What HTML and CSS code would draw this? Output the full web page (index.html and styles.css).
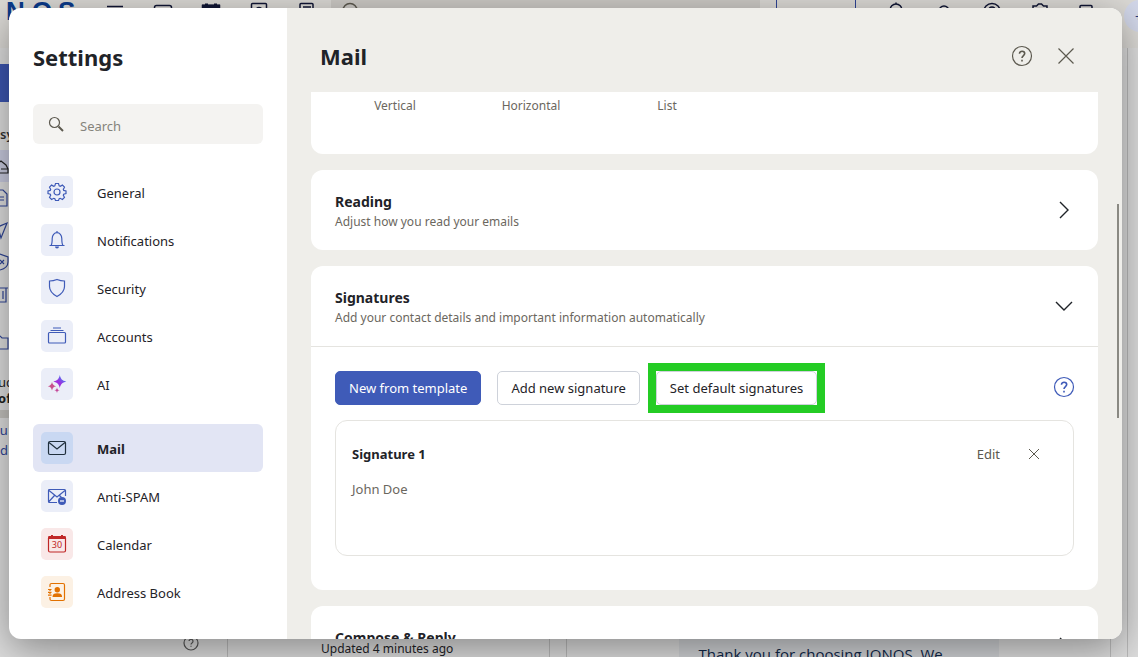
FILE: index.html
```html
<!DOCTYPE html>
<html lang="en">

<head>
    <meta charset="UTF-8">
    <title>Settings - Mail</title>
    <link rel="stylesheet" href="styles.css">
</head>

<body>

    <!-- Mail app behind the dialog -->
    <div class="app" aria-hidden="true">
        <div class="topbar">
            <svg class="logo" width="105" height="48" viewBox="0 0 105 48">
                <text x="6" y="32">N</text>
                <text x="32" y="32">O</text>
                <text x="58" y="32">S</text>
            </svg>
            <div class="topbar-apps">
                <svg class="icon" viewBox="0 0 20 20"><path d="M2 4.500h16M2 10h16M2 16h16"/></svg>
                <svg class="icon" viewBox="0 0 20 20"><rect x="1.500" y="3.500" width="17" height="13" rx="2"/></svg>
                <svg class="icon" viewBox="0 0 20 20"><path d="M1.500 3.500h17v14h-17z"/><path class="solid" d="M1 2.500h18v5.500H1zM4 1.500h3v2H4zM13 1.500h3v2h-3z"/></svg>
                <svg class="icon" viewBox="0 0 20 20"><rect x="2.500" y="1.500" width="15" height="17" rx="1"/><circle cx="10" cy="8" r="2.500"/></svg>
                <svg class="icon" viewBox="0 0 20 20"><rect x="3" y="1.500" width="13" height="17" rx="1"/><path d="M6 5h8M6 9h8"/></svg>
            </div>
            <div class="topbar-search">
                <svg class="icon" viewBox="0 0 20 20"><circle cx="9" cy="8.500" r="7"/></svg>
            </div>
            <div class="topbar-promo"></div>
            <div class="topbar-tools">
                <svg class="icon" viewBox="0 0 20 20"><path d="M4 15V8a6 6 0 0 1 12 0v7zM10 0.500v2"/></svg>
                <svg class="icon" viewBox="0 0 20 20"><circle cx="10" cy="9" r="5"/></svg>
                <svg class="icon" viewBox="0 0 20 20"><circle cx="10" cy="10" r="8.500"/><circle cx="10" cy="8" r="3"/></svg>
                <svg class="icon" viewBox="0 0 20 20"><path d="M3 8V4h3.500L8.500 2h3l2 2H17v4"/></svg>
                <svg class="icon" viewBox="0 0 20 20"><rect x="2" y="3.500" width="12" height="13" rx="1"/></svg>
            </div>
            <span class="avatar">+</span>
        </div>
        <div class="panes">
            <div class="folders">
                <div class="folders-compose"></div>
                <p class="folders-account">sy</p>
                <div class="folders-row current"><svg class="icon" viewBox="0 0 20 20"><path d="M7 9l5-4 5 4 2 4v4H5M12 13h7"/></svg></div>
                <div class="folders-row"><svg class="icon" viewBox="0 0 20 20"><path d="M5 2h9l4 4v12H5M10 9h5M10 12h5"/></svg></div>
                <div class="folders-row"><svg class="icon" viewBox="0 0 20 20"><path d="M4 9L18 3l-6 15-2-7z"/></svg></div>
                <div class="folders-row"><svg class="icon" viewBox="0 0 20 20"><path d="M11 2l8 3v5c0 5-4 7-8 8M11 8l4 4M15 8l-4 4"/></svg></div>
                <div class="folders-row"><svg class="icon" viewBox="0 0 20 20"><path d="M4 4h15M5 4v14h12V4M10 7v8M14 7v8"/></svg></div>
                <div class="folders-row spaced"><svg class="icon" viewBox="0 0 20 20"><path d="M4 4h7l2 2h6v11H4"/></svg></div>
                <p class="folders-quota">uc<br><b>of</b></p>
                <div class="folders-promo">ou<br>nd</div>
                <svg class="icon folders-help" viewBox="0 0 20 20"><circle cx="10" cy="10" r="7"/><path d="M8 8a2 2 0 1 1 3 2c-.7.400-1 .8-1 1.500M10 12.700v1"/></svg>
            </div>
            <div class="messages">
                <p>Updated 4 minutes ago</p>
            </div>
            <div class="reader">
                <div class="reader-mail">Thank you for choosing IONOS. We</div>
            </div>
            <div class="rail"></div>
        </div>
    </div>

    <!-- Settings dialog -->
    <div class="dialog" role="dialog" aria-labelledby="dialog-title">
        <aside class="sidebar">
            <h2 id="dialog-title">Settings</h2>
            <label class="search">
                <svg class="icon" viewBox="0 0 20 20"><circle cx="8.500" cy="8.500" r="5"/><path d="M12.500 12.500l4.500 4.500" stroke-width="1.900"/></svg>
                <input type="text" placeholder="Search" aria-label="Search">
            </label>
            <nav class="menu">
                <a href="#general">
                    <span class="tile"><svg class="icon" viewBox="0 0 20 20"><circle cx="10" cy="10" r="3"/><path d="M8.500 1.500h3l.7 2.400 1 .4 2.200-1.200 2.100 2.100-1.200 2.200.4 1 2.300.6v2.500l-2.300.7-.4 1 1.200 2.200-2.100 2.100-2.200-1.200-1 .4-.7 1.800h-3l-.7-1.800-1-.4-2.200 1.200-2.100-2.100 1.200-2.200-.4-1-2.300-.7V9l2.300-.6.4-1-1.200-2.200 2.100-2.100 2.200 1.200 1-.4z"/></svg></span>
                    <span>General</span>
                </a>
                <a href="#notifications">
                    <span class="tile"><svg class="icon" viewBox="0 0 20 20"><path d="M2.500 15.500h15M4 15.500c1.200-1.500 1.200-3 1.200-7a4.800 5.800 0 0 1 9.600 0c0 4 0 5.500 1.200 7M10 1v2"/><path class="solid" d="M8 16.500h4a2 2 0 0 1-4 0z"/></svg></span>
                    <span>Notifications</span>
                </a>
                <a href="#security">
                    <span class="tile"><svg class="icon" viewBox="0 0 20 20"><path d="M10 1.500c2.500 1 5 1.500 7.500 1.500v5.500c0 4.500-3 7.500-7.500 10-4.500-2.500-7.500-5.500-7.500-10V3C5 3 7.500 2.500 10 1.500z"/></svg></span>
                    <span>Security</span>
                </a>
                <a href="#accounts">
                    <span class="tile"><svg class="icon" viewBox="0 0 20 20"><rect x="1.500" y="6.500" width="17" height="10.500" rx="1"/><path d="M3.500 4.500h13M6 2h8"/></svg></span>
                    <span>Accounts</span>
                </a>
                <a href="#ai">
                    <span class="tile"><svg class="icon" viewBox="0 0 20 20">
                        <defs>
                            <linearGradient id="spark" x1="1" y1="0" x2="0" y2="1">
                                <stop offset="0.200" stop-color="#4b7bf0"/>
                                <stop offset="0.550" stop-color="#9b30e0"/>
                                <stop offset="1" stop-color="#b832c8"/>
                            </linearGradient>
                        </defs>
                        <path class="spark" fill="url(#spark)" d="M12.800 1c1 4 2.200 5.500 6.500 6.500-4.300 1-5.500 2.500-6.500 6.500-1-4-2.200-5.500-6.500-6.500 4.300-1 5.500-2.500 6.500-6.500z"/>
                        <path class="spark" fill="#c8508c" d="M5 8c.7 2.700 1.500 3.500 4.200 4.200C6.500 12.900 5.700 13.700 5 16.400c-.7-2.700-1.500-3.500-4.200-4.200C3.500 11.500 4.300 10.700 5 8z"/>
                        <path class="spark" fill="#c4499a" d="M10 13.500c.4 1.900.9 2.400 2.800 2.800-1.900.4-2.400.9-2.800 2.800-.4-1.900-.9-2.400-2.800-2.800 1.900-.4 2.400-.9 2.800-2.800z"/>
                    </svg></span>
                    <span>AI</span>
                </a>
                <a href="#mail" class="active" aria-current="page">
                    <span class="tile"><svg class="icon" viewBox="0 0 20 20"><rect x="1.500" y="3.500" width="17" height="13" rx="1.500"/><path d="M2 4.500l8 6.500 8-6.500"/></svg></span>
                    <span>Mail</span>
                </a>
                <a href="#spam">
                    <span class="tile"><svg class="icon" viewBox="0 0 20 20"><path d="M10 16.500H2.500a1 1 0 0 1-1-1v-11a1 1 0 0 1 1-1h15a1 1 0 0 1 1 1V10M2 4.500l8 6.500 8-6.500M2 15.500l5.500-6M12.500 9.500l2 2"/><circle class="solid" cx="15" cy="15" r="4"/><path d="M13 15h4" stroke="#fff"/></svg></span>
                    <span>Anti-SPAM</span>
                </a>
                <a href="#calendar">
                    <span class="tile tile-red"><svg class="icon" viewBox="0 0 20 20"><rect x="1.500" y="2.500" width="17" height="15.500" rx="1.500"/><path class="solid" d="M1.500 2h17v3h-17zM4 1h2v1.500H4zM14 1h2v1.500h-2z"/><text x="10" y="14" text-anchor="middle">30</text></svg></span>
                    <span>Calendar</span>
                </a>
                <a href="#contacts">
                    <span class="tile tile-orange"><svg class="icon" viewBox="0 0 20 20"><path d="M3 5V3a1.500 1.500 0 0 1 1.500-1.500h11.500A1.500 1.500 0 0 1 17.500 3v14a1.500 1.500 0 0 1-1.500 1.500H4.500A1.500 1.500 0 0 1 3 17v-2M1 7.500h3.500M1 10.300h3.500M1 13.200h3.500M3 9v-1M3 12v-1"/><circle class="solid" cx="10.300" cy="7.700" r="2.700"/><path class="solid" d="M5.500 15c0-2.800 1.500-3.800 4.800-3.800s4.800 1 4.800 3.800z"/></svg></span>
                    <span>Address Book</span>
                </a>
            </nav>
        </aside>

        <main class="content">
            <header class="content-header">
                <h1>Mail</h1>
                <button type="button" class="icon-button" aria-label="Help"><svg class="icon" viewBox="0 0 24 24"><circle cx="12" cy="12" r="9.500"/><path stroke-width="1.600" d="M9.500 9.800c0-3.500 5.200-3.200 5.200-.2 0 1.900-2.700 2-2.700 4.400M12 15.800v1.700"/></svg></button>
                <button type="button" class="icon-button" aria-label="Close"><svg class="icon" viewBox="0 0 24 24"><path d="M4.500 4.500l15 15M19.500 4.500l-15 15"/></svg></button>
            </header>

            <div class="cards">
                <section class="card layouts">
                    <span>Vertical</span>
                    <span>Horizontal</span>
                    <span>List</span>
                </section>

                <section class="card">
                    <div class="card-header">
                        <div>
                            <h3>Reading</h3>
                            <p>Adjust how you read your emails</p>
                        </div>
                        <button type="button" class="toggle" aria-label="Expand Reading"><svg class="icon" viewBox="0 0 20 20"><path d="M6 2l8 8-8 8"/></svg></button>
                    </div>
                </section>

                <section class="card">
                    <div class="card-header">
                        <div>
                            <h3>Signatures</h3>
                            <p>Add your contact details and important information automatically</p>
                        </div>
                        <button type="button" class="toggle" aria-label="Collapse Signatures"><svg class="icon" viewBox="0 0 20 20"><path d="M2 6l8 8 8-8"/></svg></button>
                    </div>
                    <div class="card-body">
                        <div class="actions">
                            <button type="button" class="btn btn-primary">New from template</button>
                            <button type="button" class="btn">Add new signature</button>
                            <span class="highlight"><button type="button" class="btn">Set default signatures</button></span>
                            <button type="button" class="icon-button help" aria-label="Help"><svg class="icon" viewBox="0 0 24 24"><circle cx="12" cy="12" r="9.500"/><path stroke-width="1.600" d="M9.500 9.800c0-3.500 5.200-3.200 5.200-.2 0 1.900-2.700 2-2.700 4.400M12 15.800v1.700"/></svg></button>
                        </div>
                        <div class="signature">
                            <div class="signature-header">
                                <h4>Signature 1</h4>
                                <button type="button" class="link-button">Edit</button>
                                <button type="button" class="link-button" aria-label="Delete Signature 1"><svg class="icon icon-thin" viewBox="0 0 20 20"><path d="M5 5l10 10M15 5L5 15"/></svg></button>
                            </div>
                            <p>John Doe</p>
                        </div>
                    </div>
                </section>

                <section class="card">
                    <div class="card-header">
                        <div>
                            <h3>Compose &amp; Reply</h3>
                        </div>
                        <button type="button" class="toggle" aria-label="Expand Compose"><svg class="icon" viewBox="0 0 20 20"><path d="M6 2l8 8-8 8"/></svg></button>
                    </div>
                </section>
            </div>
            <div class="scroll-thumb"></div>
        </main>
    </div>

</body>

</html>
```
FILE: styles.css
```css
/* styles.css */

* {
    box-sizing: border-box;
}

body {
    margin: 0;
    height: 100vh;
    overflow: hidden;
    position: relative;
    background-color: #d8d8d8;
    color: #1f2328;
    font-family: "Noto Sans", "Open Sans", sans-serif;
    font-size: 13px;
    line-height: 20px;
}

h1, h2, h3, h4, p {
    margin: 0;
}

button, input {
    font: inherit;
    color: inherit;
}

.icon {
    display: block;
    flex: none;
    width: 20px;
    height: 20px;
    fill: none;
    stroke: currentColor;
    stroke-width: 1.2;
}

.icon-thin {
    stroke-width: 1;
}

.icon .solid {
    fill: currentColor;
    stroke: none;
}

/* App behind the dialog */
.app {
    display: flex;
    flex-direction: column;
    height: calc(100vh + 24px);
    margin-top: -24px;
}

.topbar {
    display: flex;
    align-items: center;
    flex: none;
    height: 72px;
    background-color: #dcdad6;
    color: #101634;
}

.topbar .icon {
    stroke-width: 1.5;
}

.logo {
    flex: none;
}

.logo text {
    fill: #0b3b8c;
    font-family: "Liberation Sans", sans-serif;
    font-size: 26px;
    font-weight: 700;
}

.topbar-apps,
.topbar-tools {
    display: flex;
    gap: 28px;
}

.topbar-search {
    display: flex;
    align-items: center;
    flex: 1;
    height: 40px;
    margin-left: 14px;
    padding-left: 10px;
    background-color: #cdcac6;
    color: #5c594f;
}

.topbar-promo {
    width: 80px;
    height: 40px;
    margin: 0 30px 0 16px;
    border: 1px solid #2f4596;
}

.avatar {
    width: 32px;
    height: 32px;
    margin: 8px -18px 0 26px;
    padding: 6px 11px;
    border-radius: 50%;
    background-color: #d3d8ea;
    color: #23387f;
}

.panes {
    display: flex;
    flex: 1;
    background-color: #dedede;
}

.folders {
    display: flex;
    flex-direction: column;
    width: 228px;
    padding-top: 16px;
    border-right: 1px solid #bbb;
    color: #2f4596;
}

.folders-compose {
    height: 38px;
    background-color: #3c55b0;
}

.folders-account {
    margin: 22px 0 6px;
    color: #333;
    font-weight: 600;
}

.folders-row {
    display: flex;
    align-items: center;
    height: 32px;
    margin-left: -11px;
}

.folders-row.current {
    background-color: #c8cade;
    color: #222;
}

.folders-row.spaced {
    margin-top: 16px;
}

.folders-quota {
    margin: 16px 0 4px -2px;
    color: #222;
    line-height: 16px;
}

.folders-promo {
    margin-left: -8px;
    padding-top: 2px;
    border-top: 8px solid #c4c2be;
}

.folders-help {
    margin: auto 26px 4px auto;
    color: #555;
}

.messages {
    display: flex;
    align-items: flex-end;
    width: 322px;
    padding-left: 93px;
    border-right: 1px solid #bbb;
    font-size: 12px;
    line-height: 16px;
}

.reader {
    display: flex;
    justify-content: center;
    align-items: flex-end;
    flex: 1;
    margin: 0 16px;
    border-left: 1px solid #bbb;
    border-right: 1px solid #bbb;
}

.reader-mail {
    width: 320px;
    padding: 300px 20px 0;
    background-color: #d1d3d6;
    color: #0f2748;
    font-family: "Open Sans", sans-serif;
    font-size: 15px;
    line-height: 6px;
}

.rail {
    width: 11px;
    border-left: 1px solid #bbb;
}

/* Dialog */
.dialog {
    position: absolute;
    top: 8px;
    right: 16px;
    bottom: 18px;
    left: 9px;
    display: flex;
    overflow: hidden;
    border-radius: 12px;
    background-color: #fff;
    box-shadow: 0 10px 40px rgba(0, 0, 0, 0.4);
}

.sidebar {
    flex: none;
    width: 278px;
    padding: 33px 24px 0;
}

.sidebar h2,
.content h1 {
    font-size: 22px;
    line-height: 32px;
    font-weight: 700;
}

.search {
    display: flex;
    align-items: center;
    gap: 14px;
    height: 40px;
    margin: 31px 0 24px;
    padding: 0 13px;
    border-radius: 6px;
    background-color: #f4f3f1;
    color: #5c594f;
}

.search input {
    flex: 1;
    min-width: 0;
    padding: 4px 0 0;
    border: 0;
    outline: 0;
    background: none;
}

.search input::placeholder {
    color: #85837c;
}

.menu a {
    display: flex;
    align-items: center;
    gap: 24px;
    height: 48px;
    padding: 0 8px;
    border-radius: 6px;
    color: inherit;
    line-height: 18px;
    text-decoration: none;
}

.menu a > span:last-child {
    padding-top: 2px;
}

.menu .active {
    margin-top: 16px;
    background-color: #e2e5f4;
    font-weight: 700;
}

.tile {
    display: grid;
    place-items: center;
    width: 32px;
    height: 32px;
    border-radius: 5px;
    background-color: #ebeef8;
    color: #3f5bb8;
}

.active .tile {
    background-color: #c9d8f2;
    color: #1f2f3c;
}

.tile-red {
    background-color: #f9e8e8;
    color: #c02626;
}

.tile-orange {
    background-color: #fcf1e4;
    color: #e27100;
}

.tile text {
    fill: currentColor;
    stroke: none;
    font-size: 9px;
}

.icon .spark {
    stroke: none;
}

.content {
    position: relative;
    display: flex;
    flex: 1;
    flex-direction: column;
    min-width: 0;
    padding: 0 24px;
    background-color: #efeeea;
}

.content-header {
    display: flex;
    align-items: center;
    flex: none;
    gap: 20px;
    height: 84px;
    padding: 12px 20px 0 9px;
}

.content-header h1 {
    flex: 1;
}

.icon-button,
.toggle,
.link-button {
    padding: 0;
    border: 0;
    background: none;
    color: #5c594f;
    cursor: pointer;
}

.icon-button .icon {
    width: 24px;
    height: 24px;
}

.cards {
    display: flex;
    flex: 1;
    flex-direction: column;
    gap: 16px;
    min-height: 0;
    overflow: hidden;
}

.card {
    flex: none;
    border-radius: 12px;
    background-color: #fff;
}

.layouts {
    display: flex;
    padding: 4px 16px 38px;
    border-radius: 0 0 12px 12px;
    color: #6b675e;
    font-size: 12px;
}

.layouts span {
    width: 136px;
    text-align: center;
}

.card-header {
    display: flex;
    justify-content: space-between;
    height: 80px;
    padding: 22px 24px 0;
}

.card-header h3 {
    font-size: 14px;
    line-height: 20px;
}

.card-header p {
    color: #6b675e;
    font-size: 12px;
}

.toggle {
    height: 36px;
    color: #1f2328;
}

.toggle .icon {
    stroke-width: 1.4;
}

.card-body {
    padding: 24px 24px 34px;
    border-top: 1px solid #e5e4e0;
}

.actions {
    display: flex;
    gap: 16px;
    margin-bottom: 15px;
}

.btn {
    display: block;
    height: 34px;
    padding: 0 13px;
    border: 1px solid #ced2da;
    border-radius: 5px;
    background-color: #fff;
    cursor: pointer;
}

.btn-primary {
    border-color: #3f5bb8;
    background-color: #3f5bb8;
    color: #fff;
}

/* Square frame round the button the guide points to */
.highlight {
    box-shadow: 0 0 0 8px #24cc24;
}

.help {
    height: 32px;
    margin-left: auto;
    margin-right: -2px;
    color: #3f5bb8;
}

.signature {
    height: 136px;
    padding: 23px 29px 0 16px;
    border: 1px solid #e5e4e0;
    border-radius: 12px;
}

.signature-header {
    display: flex;
    align-items: center;
    gap: 24px;
    margin-bottom: 15px;
}

.signature-header h4 {
    flex: 1;
    font-size: 13px;
}

.signature p {
    color: #6b675e;
}

.scroll-thumb {
    position: absolute;
    top: 31%;
    right: 3px;
    width: 2px;
    height: 34%;
    background-color: #8a8983;
}
```
